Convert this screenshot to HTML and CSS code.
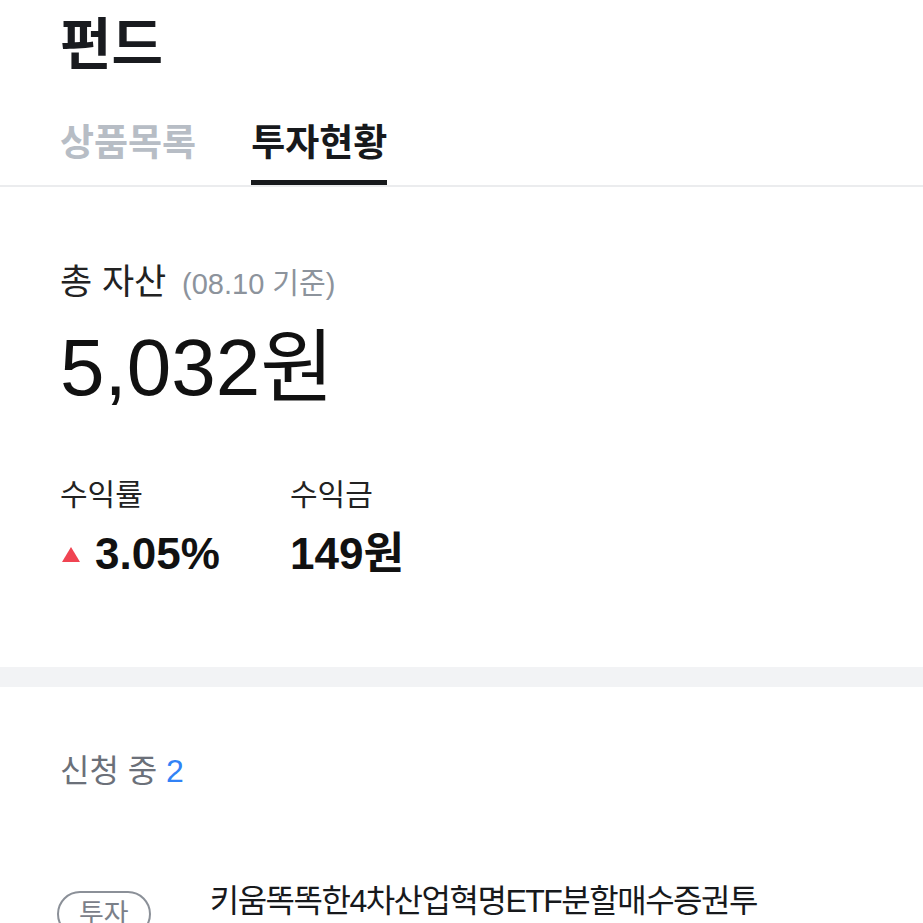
FILE: index.html
```html
<!DOCTYPE html>
<html lang="ko">
<head>
  <meta charset="UTF-8">
  <title>펀드 - 투자현황</title>
  <link rel="stylesheet" href="styles.css">
</head>
<body>
  <header class="top">
    <h1 class="title">펀드</h1>
    <nav class="tabs">
      <a class="tab">상품목록</a>
      <a class="tab active">투자현황</a>
    </nav>
  </header>

  <section class="summary">
    <div class="total-label">총 자산 <span class="base-date">(08.10 기준)</span></div>
    <div class="total-amount">5,032원</div>

    <div class="stats">
      <div class="stat">
        <div class="stat-label">수익률</div>
        <div class="stat-value"><span class="up"></span>3.05%</div>
      </div>
      <div class="stat">
        <div class="stat-label">수익금</div>
        <div class="stat-value">149원</div>
      </div>
    </div>
  </section>

  <div class="gap"></div>

  <section class="pending">
    <div class="pending-title">신청 중 <span class="count">2</span></div>

    <div class="fund-row">
      <span class="badge">투자</span>
      <div class="fund-name">키움똑똑한4차산업혁명ETF분할매수증권투</div>
    </div>
  </section>
</body>
</html>
```

FILE: styles.css
```css
body {
  margin: 0;
  font-family: "Liberation Sans", "Noto Sans CJK KR", sans-serif;
  color: #191b1f;
  background: #fff;
  overflow: hidden;
}

.top {
  border-bottom: 2px solid #ebecee;
}

.title {
  margin: 0;
  padding: 10px 60px 0;
  font-size: 56px;
  font-weight: bold;
  line-height: 70px;
}

.tabs {
  display: flex;
  gap: 55px;
  padding: 0 60px;
  margin-top: 42px;
}

.tab {
  font-size: 37px;
  font-weight: bold;
  color: #b7bdc5;
  line-height: 44px;
  padding-bottom: 14px;
  border-bottom: 5px solid transparent;
}

.tab.active {
  color: #17191c;
  border-bottom-color: #17191c;
}

.summary {
  padding: 74px 60px 88px;
}

.total-label {
  font-size: 35px;
  line-height: 42px;
  color: #222;
}

.base-date {
  font-size: 29px;
  color: #8c939c;
  margin-left: 6px;
}

.total-amount {
  margin-top: 21px;
  font-size: 80px;
  line-height: 84px;
  color: #111;
}

.stats {
  display: grid;
  grid-template-columns: 230px auto;
  margin-top: 67px;
}

.stat-label {
  font-size: 30px;
  line-height: 36px;
  color: #222;
}

.stat-value {
  margin-top: 16px;
  font-size: 44px;
  font-weight: bold;
  line-height: 50px;
  color: #111;
  display: flex;
  align-items: center;
}

.up {
  width: 0;
  height: 0;
  border-left: 9px solid transparent;
  border-right: 9px solid transparent;
  border-bottom: 15px solid #f04452;
  margin: 0 15px 0 2px;
}

.gap {
  height: 20px;
  background: #f2f3f5;
}

.pending {
  padding: 64px 60px 0;
}

.pending-title {
  font-size: 32px;
  line-height: 40px;
  color: #6b7079;
}

.count {
  color: #3182f6;
}

.fund-row {
  display: flex;
  align-items: flex-start;
  gap: 59px;
  margin-top: 90px;
}

.badge {
  border: 2px solid #8b9098;
  border-radius: 24px;
  padding: 4px 20px;
  font-size: 27px;
  line-height: 34px;
  color: #7b8089;
  margin-top: 10px;
  margin-left: -3px;
}

.fund-name {
  font-size: 32px;
  line-height: 40px;
  letter-spacing: -1.5px;
  color: #17191c;
}
```
